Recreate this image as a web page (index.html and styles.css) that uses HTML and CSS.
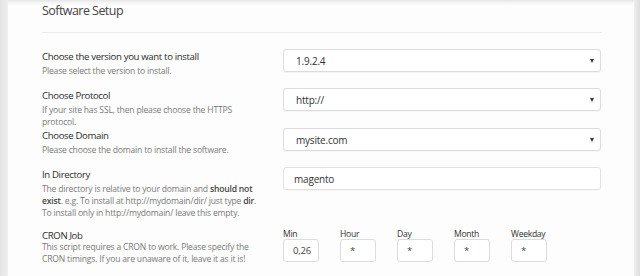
FILE: index.html
```html
<!DOCTYPE html>
<html>
<head>
<meta charset="utf-8">
<link rel="stylesheet" href="styles.css">
</head>
<body>
<div class="page">
  <div class="panel">
    <h1 class="title">Software Setup</h1>
    <hr class="rule">
    <div class="row">
      <div class="info">
        <div class="label">Choose the version you want to install</div>
        <div class="desc">Please select the version to install.</div>
      </div>
      <div class="field">
        <div class="select"><span>1.9.2.4</span><span class="caret"></span></div>
      </div>
    </div>
    <div class="row">
      <div class="info">
        <div class="label">Choose Protocol</div>
        <div class="desc">If your site has SSL, then please choose the HTTPS protocol.</div>
      </div>
      <div class="field">
        <div class="select"><span>http://</span><span class="caret"></span></div>
      </div>
    </div>
    <div class="row">
      <div class="info">
        <div class="label">Choose Domain</div>
        <div class="desc">Please choose the domain to install the software.</div>
      </div>
      <div class="field">
        <div class="select"><span>mysite.com</span><span class="caret"></span></div>
      </div>
    </div>
    <div class="row">
      <div class="info">
        <div class="label">In Directory</div>
        <div class="desc">The directory is relative to your domain and <b>should not exist</b>. e.g. To install at http://mydomain/dir/ just type <b>dir</b>. To install only in http://mydomain/ leave this empty.</div>
      </div>
      <div class="field">
        <div class="input">magento</div>
      </div>
    </div>
    <div class="row cron-row">
      <div class="info">
        <div class="label">CRON Job</div>
        <div class="desc tight">This script requires a CRON to work. Please specify the CRON timings. If you are unaware of it, leave it as it is!</div>
      </div>
      <div class="cron">
        <div class="cron-item"><div class="cron-label">Min</div><div class="cron-box">0,26</div></div>
        <div class="cron-item"><div class="cron-label">Hour</div><div class="cron-box">*</div></div>
        <div class="cron-item"><div class="cron-label">Day</div><div class="cron-box">*</div></div>
        <div class="cron-item"><div class="cron-label">Month</div><div class="cron-box">*</div></div>
        <div class="cron-item"><div class="cron-label">Weekday</div><div class="cron-box">*</div></div>
      </div>
    </div>
  </div>
</div>
</body>
</html>
```
FILE: styles.css
```css
html, body {
  margin: 0;
  padding: 0;
}
body {
  width: 640px;
  height: 276px;
  overflow: hidden;
  background: linear-gradient(to right, #e4e4e4 0, #efefef 8px, #efefef 634px, #e9e9e9 636px, #dedede 640px);
  font-family: "Open Sans", "Noto Sans", sans-serif;
  color: #333;
}
.page {
  margin-left: 8px;
  width: 626px;
  height: 276px;
  background: linear-gradient(to bottom, #e6e6e6 0, #f7f7f7 3px, #fdfdfd 6px, #fdfdfd 100%);
}
.panel {
  padding: 0 32px 0 34px;
}
.title {
  margin: 0;
  padding-top: 2px;
  font-size: 12.5px;
  line-height: 17px;
  font-weight: 400;
  color: #444;
  letter-spacing: -0.55px;
}
.rule {
  margin: 13px 0 0;
  border: 0;
  border-top: 1px solid #ebebeb;
  height: 0;
}
.row {
  display: grid;
  grid-template-columns: 241px 318px;
  align-items: start;
}
.row:first-of-type {
  margin-top: 16px;
}
.info {
  width: 223px;
}
.label {
  font-size: 9.6px;
  line-height: 15px;
  color: #2b2b2b;
  letter-spacing: -0.35px;
  margin-top: 0;
}
.desc {
  font-size: 8.6px;
  line-height: 12px;
  color: #7a7a7a;
  letter-spacing: -0.2px;
  margin-top: 1px;
}
.desc b {
  color: #444;
  font-weight: 600;
}
.field {
  padding-bottom: 16px;
}
.select, .input {
  box-sizing: border-box;
  height: 23px;
  border: 1px solid #dcdcdc;
  border-radius: 3px;
  background: #fff;
  font-size: 10px;
  color: #333;
  display: flex;
  align-items: center;
  justify-content: space-between;
  padding: 0 6px 0 12px;
  letter-spacing: -0.2px;
  box-shadow: 0 1px 1px rgba(0,0,0,0.03);
}
.input {
  padding-left: 10px;
  border-color: #e2e2e2;
}
.caret {
  width: 0;
  height: 0;
  border-left: 2.5px solid transparent;
  border-right: 2.5px solid transparent;
  border-top: 4px solid #333;
}
.cron-row {
  margin-top: 10px;
}
.cron-row .label {
  line-height: 13px;
}
.desc.tight {
  margin-top: 0;
  line-height: 11.5px;
}
.cron {
  display: flex;
  gap: 21px;
}
.cron-item {
  width: 36px;
}
.cron-label {
  font-size: 8.6px;
  line-height: 10px;
  color: #333;
  letter-spacing: -0.3px;
  margin-bottom: 0;
}
.cron-box {
  box-sizing: border-box;
  width: 36px;
  height: 23px;
  border: 1px solid #dcdcdc;
  border-radius: 3px;
  background: #fff;
  font-size: 9.5px;
  line-height: 21px;
  padding-left: 9px;
  color: #444;
  letter-spacing: -0.2px;
}
```
